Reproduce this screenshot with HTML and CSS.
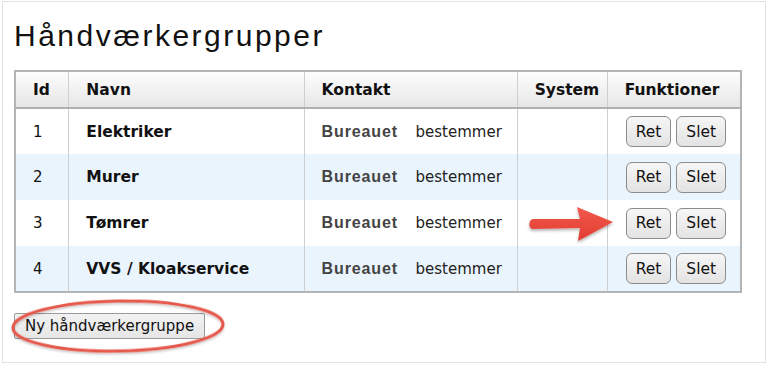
FILE: index.html
```html
<!DOCTYPE html>
<html lang="da">
<head>
    <meta charset="UTF-8">
    <title>Håndværkergrupper</title>
    <link rel="stylesheet" href="styles.css">
</head>
<body>
    <div class="frame">
        <h1>Håndværkergrupper</h1>

        <table class="groups">
            <thead>
                <tr>
                    <th class="col-id">Id</th>
                    <th class="col-name">Navn</th>
                    <th class="col-contact">Kontakt</th>
                    <th class="col-system">System</th>
                    <th class="col-actions">Funktioner</th>
                </tr>
            </thead>
            <tbody>
                <tr>
                    <td>1</td>
                    <td class="name">Elektriker</td>
                    <td><span class="who">Bureauet</span><span class="what">bestemmer</span></td>
                    <td></td>
                    <td class="actions"><button class="btn">Ret</button><button class="btn">Slet</button></td>
                </tr>
                <tr>
                    <td>2</td>
                    <td class="name">Murer</td>
                    <td><span class="who">Bureauet</span><span class="what">bestemmer</span></td>
                    <td></td>
                    <td class="actions"><button class="btn">Ret</button><button class="btn">Slet</button></td>
                </tr>
                <tr>
                    <td>3</td>
                    <td class="name">Tømrer</td>
                    <td><span class="who">Bureauet</span><span class="what">bestemmer</span></td>
                    <td></td>
                    <td class="actions"><button class="btn">Ret</button><button class="btn">Slet</button></td>
                </tr>
                <tr>
                    <td>4</td>
                    <td class="name">VVS / Kloakservice</td>
                    <td><span class="who">Bureauet</span><span class="what">bestemmer</span></td>
                    <td></td>
                    <td class="actions"><button class="btn">Ret</button><button class="btn">Slet</button></td>
                </tr>
            </tbody>
        </table>

        <button class="new-btn">Ny håndværkergruppe</button>

        <!-- annotations drawn on top of the screenshot -->
        <svg class="mark-arrow" width="100" height="50" viewBox="0 0 100 50">
            <defs>
                <linearGradient id="arrowFill" x1="0" y1="0" x2="0" y2="1">
                    <stop offset="0" stop-color="#f25a4c"/>
                    <stop offset="1" stop-color="#e03c30"/>
                </linearGradient>
                <filter id="arrowShadow" x="-20%" y="-40%" width="140%" height="180%">
                    <feDropShadow dx="0" dy="2" stdDeviation="1.6" flood-color="#000" flood-opacity="0.3"/>
                </filter>
            </defs>
            <path d="M8 22 Q6 28 10 30 L58 29 L56 42 L91 23 L55 8 L58 20 L12 20 Q9 20 8 22 Z" fill="url(#arrowFill)" filter="url(#arrowShadow)"/>
        </svg>

        <svg class="mark-ring" width="224" height="66" viewBox="0 0 224 66">
            <defs>
                <filter id="ringShadow" x="-10%" y="-30%" width="120%" height="160%">
                    <feDropShadow dx="0" dy="1.5" stdDeviation="1.2" flood-color="#000" flood-opacity="0.25"/>
                </filter>
            </defs>
            <ellipse cx="112" cy="32" rx="105" ry="25" transform="rotate(-1 112 32)" fill="none" stroke="#e5594c" stroke-width="3" filter="url(#ringShadow)"/>
        </svg>
    </div>
</body>
</html>
```

FILE: styles.css
```css
* {
    margin: 0;
    padding: 0;
    box-sizing: border-box;
}

body {
    background: white;
    font-family: "DejaVu Sans", Verdana, sans-serif;
    color: #111;
}

.frame {
    position: relative;
    width: 764px;
    height: 362px;
    margin: 1px 0 0 2px;
    border: 1px solid #e2e2e2;
    padding: 17px 0 0 11px;
}

h1 {
    font-family: "Liberation Sans", Arial, sans-serif;
    font-weight: normal;
    font-size: 30px;
    letter-spacing: 2.5px;
    line-height: 34px;
    color: #111;
    margin-bottom: 17px;
}

.groups {
    border-collapse: collapse;
    width: 728px;
    border: 2px solid #b4b4b4;
    font-size: 15px;
}

.groups th {
    height: 37px;
    text-align: left;
    font-weight: bold;
    font-size: 15.5px;
    padding: 0 0 0 17px;
    background: linear-gradient(#fdfdfd, #e6e6e6);
    border-bottom: 2px solid #b0b0b0;
    border-left: 1px solid #cfcfcf;
}

.groups td {
    height: 46px;
    padding: 0 0 0 17px;
    border-left: 1px solid #cfcfcf;
    vertical-align: middle;
}

.groups tbody tr:nth-child(even) td {
    background: #eaf4fd;
}

.col-id { width: 54px; }
.col-name { width: 236px; }
.col-contact { width: 214px; }
.col-system { width: 90px; }
.col-actions { width: 134px; }

.groups td.name {
    font-weight: bold;
    font-size: 15.5px;
}

.who {
    display: inline-block;
    width: 94px;
    font-family: "Liberation Sans", Arial, sans-serif;
    font-weight: bold;
    font-size: 16px;
    letter-spacing: 0.9px;
    color: #444;
}

.what {
    font-size: 15px;
    color: #222;
}

.groups td.actions {
    padding-left: 18px;
}

.btn {
    height: 31px;
    padding: 0 9px;
    margin-right: 5px;
    font-family: "DejaVu Sans", Verdana, sans-serif;
    font-size: 15.5px;
    color: #111;
    background: linear-gradient(#f6f6f6, #e3e3e3);
    border: 1px solid #8c8c8c;
    border-radius: 6px;
}

.new-btn {
    margin-top: 20px;
    height: 26px;
    padding: 0 10px;
    font-family: "DejaVu Sans", Verdana, sans-serif;
    font-size: 15px;
    color: #111;
    background: linear-gradient(#f2f2f2, #e6e6e6);
    border: 1px solid #9a9a9a;
    border-radius: 2px;
}

.mark-arrow {
    position: absolute;
    left: 519px;
    top: 197px;
}

.mark-ring {
    position: absolute;
    left: 3px;
    top: 292px;
}
```
